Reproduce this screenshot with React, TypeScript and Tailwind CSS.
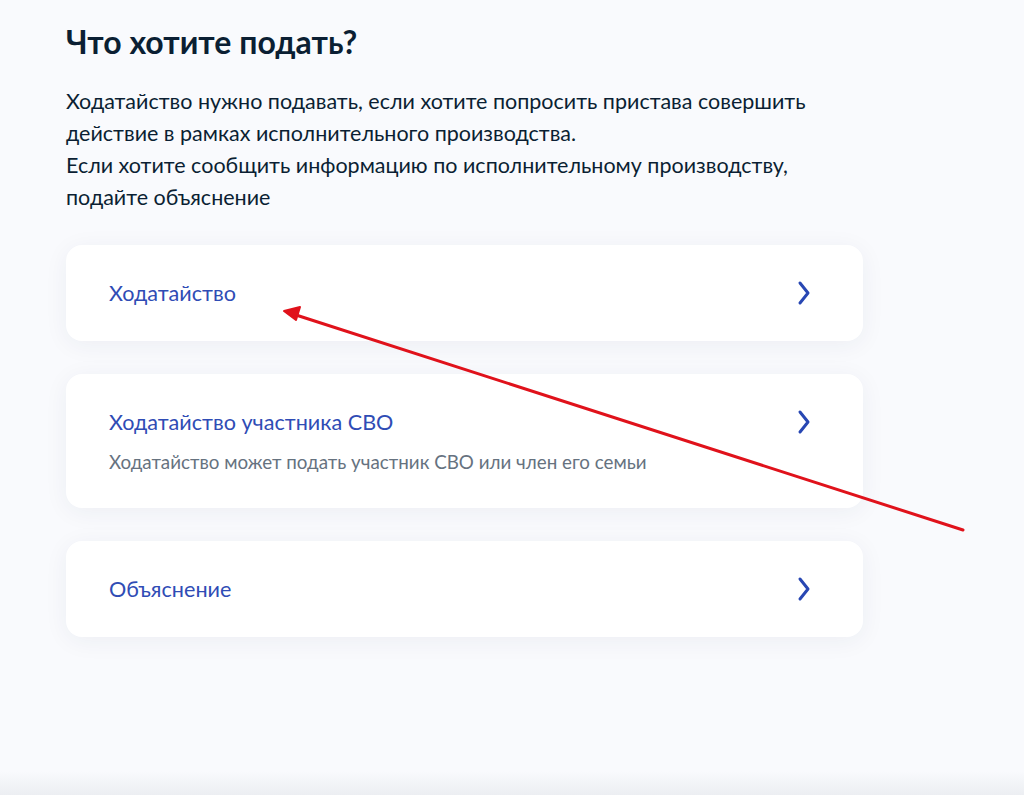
import { ReactNode } from "react";

const OPTIONS = [
  { title: "Ходатайство" },
  {
    title: "Ходатайство участника СВО",
    hint: "Ходатайство может подать участник СВО или член его семьи",
  },
  { title: "Объяснение" },
];

function Chevron() {
  return (
    <svg width="16" height="28" viewBox="0 0 16 28" fill="none" className="shrink-0">
      <path
        d="M4 4 L12 14 L4 24"
        stroke="#2847b3"
        strokeWidth="3"
        strokeLinecap="round"
        strokeLinejoin="round"
      />
    </svg>
  );
}

function OptionCard({ title, hint }: { title: string; hint?: ReactNode }) {
  return (
    <button className="w-full flex items-start justify-between text-left bg-white rounded-2xl pl-[43px] pr-[51px] py-[34px] shadow-[0_4px_24px_rgba(30,45,90,0.06)]">
      <div className="flex flex-col">
        <span className="text-[21.6px] leading-7 text-[#2f4cb5]">{title}</span>
        {hint && <span className="mt-[14px] text-[18.8px] leading-6 text-[#66727f]">{hint}</span>}
      </div>
      <Chevron />
    </button>
  );
}

export default function App() {
  return (
    <div
      className="relative min-h-[795px] w-full overflow-hidden bg-[#f9fafd] text-[#0b1f33]"
      style={{ fontFamily: "Lato, 'Noto Sans', sans-serif" }}
    >
      <div className="pl-[66px] pt-[22px] w-[863px]">
        <h1 className="text-[32px] leading-[40px] font-bold">Что хотите подать?</h1>
        <p className="mt-[23px] text-[21.5px] leading-[32px] whitespace-nowrap">
          Ходатайство нужно подавать, если хотите попросить пристава совершить
          <br />
          действие в рамках исполнительного производства.
          <br />
          Если хотите сообщить информацию по исполнительному производству,
          <br />
          подайте объяснение
        </p>
        <div className="mt-[32px] flex flex-col gap-[33px]">
          {OPTIONS.map((o) => (
            <OptionCard key={o.title} title={o.title} hint={o.hint} />
          ))}
        </div>
      </div>

      <div className="absolute inset-x-0 bottom-0 h-[24px] bg-gradient-to-b from-[#f9fafd] to-[#eceef2]" />

      {/* red annotation arrow */}
      <svg className="absolute left-0 top-0 pointer-events-none" width="1024" height="795">
        <line x1="963" y1="530" x2="296" y2="315" stroke="#e0121b" strokeWidth="3" strokeLinecap="round" />
        <path d="M284 311 L300 307 L296 320 Z" fill="#e0121b" stroke="#e0121b" strokeWidth="2" strokeLinejoin="round" />
      </svg>
    </div>
  );
}
